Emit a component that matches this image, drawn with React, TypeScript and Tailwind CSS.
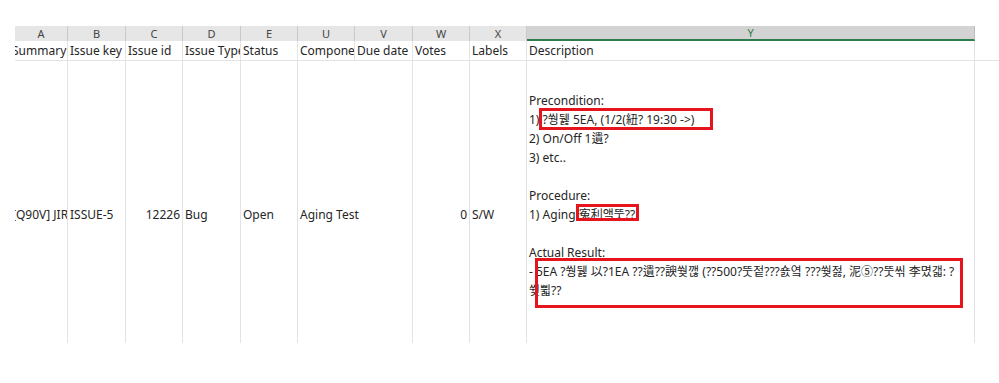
import React from 'react';

const cols = [
  { key: 'A', width: 53, title: 'Summary', value: '[Q90V] JIRA', shift: true },
  { key: 'B', width: 58, title: 'Issue key', value: 'ISSUE-5' },
  { key: 'C', width: 57, title: 'Issue id', value: '12226', right: true },
  { key: 'D', width: 58, title: 'Issue Type', value: 'Bug' },
  { key: 'E', width: 57, title: 'Status', value: 'Open' },
  { key: 'U', width: 57, title: 'Components', value: 'Aging Test', overflow: true },
  { key: 'V', width: 58, title: 'Due date', value: '', noLeftLine: true },
  { key: 'W', width: 57, title: 'Votes', value: '0', right: true },
  { key: 'X', width: 57, title: 'Labels', value: 'S/W' },
];

const font = { fontFamily: '"Noto Sans", "Noto Sans CJK KR", sans-serif' };

const RedBox = ({ className }: { className: string }) => (
  <div className={`absolute border-[3px] border-[#e5141d] ${className}`} />
);

const App = () => {
  return (
    <div className="w-[999px] h-[383px] bg-white overflow-hidden text-[12px] text-[#262626]" style={font}>
      <div className="h-[26px]" />

      {/* column letters */}
      <div className="flex h-[15px] ml-[15px]">
        {cols.map((c) => (
          <div
            key={c.key}
            className="shrink-0 bg-[#e6e6e6] border-r border-[#c9c9c9] flex items-center justify-center text-[11px] leading-none text-[#444]"
            style={{ width: c.width }}
          >
            {c.key}
          </div>
        ))}
        <div className="w-[448px] shrink-0 bg-[#d3d3d3] border-b-2 border-[#2e7d4f] border-r border-r-[#bdbdbd] flex items-center justify-center text-[11px] leading-none text-[#2e7d4f]">
          Y
        </div>
      </div>

      {/* header row */}
      <div className="flex h-[20px] ml-[15px] border-b border-[#e3e3e3]">
        {cols.map((c) => (
          <div
            key={c.key}
            className="shrink-0 border-r border-[#e3e3e3] overflow-hidden whitespace-nowrap flex items-center leading-none"
            style={{ width: c.width }}
          >
            <span className={c.shift ? '-ml-[3px]' : 'pl-[2px]'}>{c.title}</span>
          </div>
        ))}
        <div className="w-[448px] shrink-0 border-r border-[#e3e3e3] flex items-center pl-[2px] leading-none">
          Description
        </div>
      </div>

      {/* data row */}
      <div className="flex h-[282px] ml-[15px]">
        {cols.map((c, i) => {
          const next = cols[i + 1];
          const hideLine = next && next.noLeftLine;
          return (
            <div
              key={c.key}
              className={`shrink-0 whitespace-nowrap pt-[144px] leading-[19px] ${hideLine ? '' : 'border-r border-[#e3e3e3]'} ${c.overflow ? 'overflow-visible' : 'overflow-hidden'} ${c.right ? 'text-right pr-[2px]' : ''}`}
              style={{ width: c.width }}
            >
              <span className={c.shift ? '-ml-[3px]' : c.right ? '' : 'pl-[2px]'}>{c.value}</span>
            </div>
          );
        })}
        <div className="relative w-[448px] shrink-0 border-r border-[#e3e3e3] pt-[30px] pl-[2px] leading-[19px] whitespace-nowrap">
          <div>Precondition:</div>
          <div>1) ?쒕뒗 5EA, (1/2(紐? 19:30 -&gt;)</div>
          <div>2) On/Off 1遺?</div>
          <div>3) etc..</div>
          <div className="h-[19px]" />
          <div>Procedure:</div>
          <div>1) Aging 寃利앸뚯??</div>
          <div className="h-[19px]" />
          <div>Actual Result:</div>
          <div className="overflow-hidden">- 5EA ?쒕뒗 以?1EA ??遺??諛쒖깮 (??500?뚯젙???숈옄 ???쒖젏, 泥⑤??뚯씪 李몄갧: ?</div>
          <div>쒖쀫??</div>

          <RedBox className="left-[12px] top-[47px] w-[174px] h-[22px]" />
          <RedBox className="left-[49px] top-[143px] w-[63px] h-[17px]" />
          <RedBox className="left-[8px] top-[197px] w-[428px] h-[50px]" />
        </div>
      </div>
    </div>
  );
};

export default App;
